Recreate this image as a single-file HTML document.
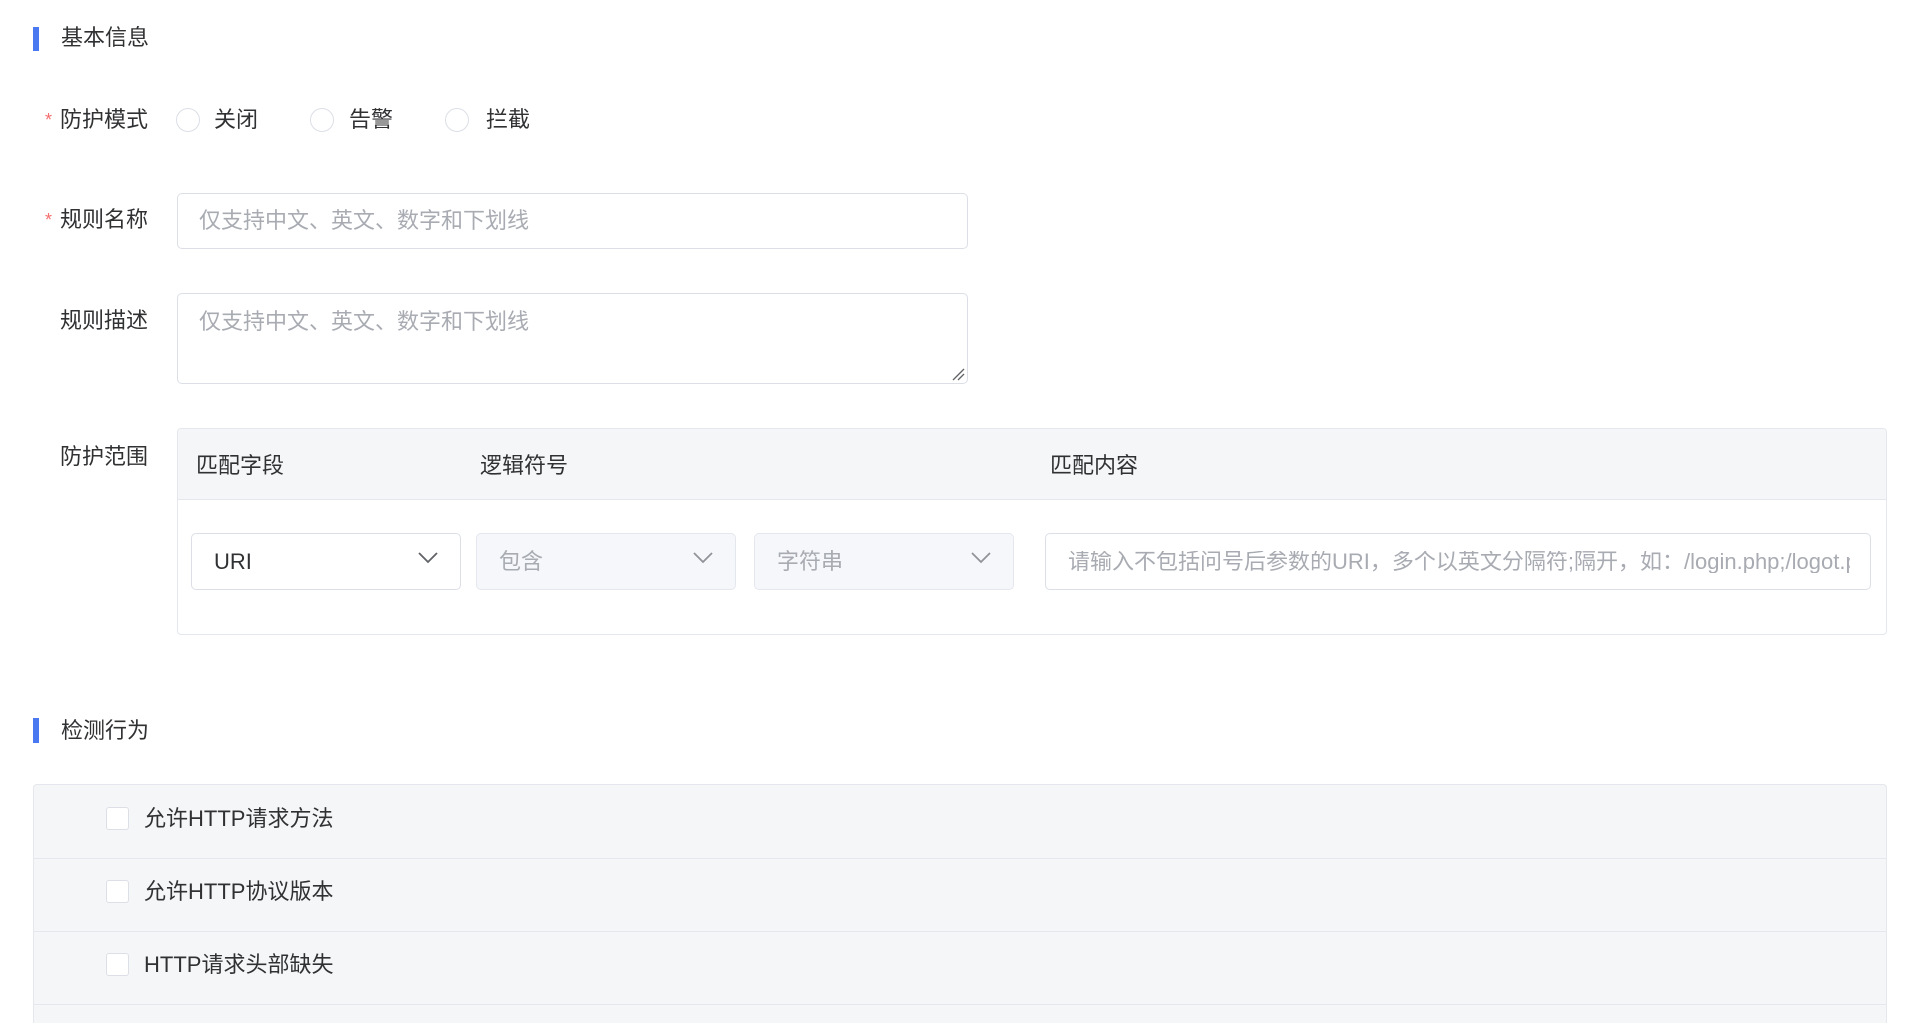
<!DOCTYPE html>
<html><head><meta charset="utf-8"><style>
*{box-sizing:border-box;margin:0;padding:0}
html{width:1913px;height:1023px;overflow:hidden}
body{width:1913px;height:1023px;background:#fff;font-family:"Liberation Sans","Noto Sans CJK SC",sans-serif;color:#303133;position:relative;overflow:hidden;font-size:22px}
.a{position:absolute}
.bar{position:absolute;left:33px;width:6px;background:#4a78f0}
.t{position:absolute;line-height:1;white-space:nowrap}
.lbl{position:absolute;right:1765px;line-height:1;white-space:nowrap}
.req:before{content:"*";color:#f56c6c;font-size:18px;position:absolute;left:-15px;top:2px}
.radio{position:absolute;width:24px;height:24px;border:1px solid #dcdfe6;border-radius:50%;background:#fff}
.box{position:absolute;border:1px solid #dcdfe6;border-radius:5px;background:#fff}
.ph{color:#a8abb2}
.chev{position:absolute;top:18px;width:20px;height:12px}
.cb{position:absolute;left:106px;width:23px;height:23px;border:1px solid #dcdfe6;border-radius:3px;background:#fff}
</style></head><body>
<div class="bar" style="top:27px;height:24px"></div>
<div class="t" style="left:61px;top:27px">基本信息</div>

<div class="lbl req" style="top:109px">防护模式</div>
<div class="radio" style="left:176px;top:108px"></div><div class="t" style="left:214px;top:109px">关闭</div>
<div class="radio" style="left:310px;top:108px"></div><div class="t" style="left:349px;top:109px">告警</div>
<div class="radio" style="left:445px;top:108px"></div><div class="t" style="left:486px;top:109px">拦截</div>

<div class="lbl req" style="top:209px">规则名称</div>
<div class="box" style="left:177px;top:193px;width:791px;height:56px"><div class="t ph" style="left:21px;top:16px">仅支持中文、英文、数字和下划线</div></div>

<div class="lbl" style="top:310px">规则描述</div>
<div class="box" style="left:177px;top:293px;width:791px;height:91px"><div class="t ph" style="left:21px;top:17px">仅支持中文、英文、数字和下划线</div>
<svg class="a" style="right:2px;bottom:2px" width="14" height="14"><path d="M2 13L13 2M7 13L13 7" stroke="#606266" stroke-width="1.3"/></svg></div>

<div class="lbl" style="top:446px">防护范围</div>
<div class="a" style="left:177px;top:428px;width:1710px;height:207px;border:1px solid #e4e7ed;border-radius:4px;background:#fff;overflow:hidden">
 <div class="a" style="left:0;top:0;right:0;height:71px;background:#f5f6f8;border-bottom:1px solid #e4e7ed"></div>
 <div class="t" style="left:18px;top:26px">匹配字段</div>
 <div class="t" style="left:302px;top:26px">逻辑符号</div>
 <div class="t" style="left:872px;top:26px">匹配内容</div>
</div>
<div class="box" style="left:191px;top:533px;width:270px;height:57px"><div class="t" style="left:22px;top:17px">URI</div><svg class="chev" style="right:22px" viewBox="0 0 20 12"><path d="M1 1l9 9 9-9" fill="none" stroke="#606266" stroke-width="1.8"/></svg></div>
<div class="box" style="left:476px;top:533px;width:260px;height:57px;background:#f5f7fa;border-color:#e4e7ed"><div class="t ph" style="left:22px;top:17px">包含</div><svg class="chev" style="right:22px" viewBox="0 0 20 12"><path d="M1 1l9 9 9-9" fill="none" stroke="#909399" stroke-width="1.8"/></svg></div>
<div class="box" style="left:754px;top:533px;width:260px;height:57px;background:#f5f7fa;border-color:#e4e7ed"><div class="t ph" style="left:22px;top:17px">字符串</div><svg class="chev" style="right:22px" viewBox="0 0 20 12"><path d="M1 1l9 9 9-9" fill="none" stroke="#909399" stroke-width="1.8"/></svg></div>
<div class="box" style="left:1045px;top:533px;width:826px;height:57px;overflow:hidden"><div class="a" style="left:22px;top:17px;right:20px;overflow:hidden;line-height:1;white-space:nowrap;color:#a8abb2">请输入不包括问号后参数的URI，多个以英文分隔符;隔开，如：/login.php;/logot.php</div></div>

<div class="bar" style="top:718px;height:25px"></div>
<div class="t" style="left:61px;top:720px">检测行为</div>

<div class="a" style="left:33px;top:784px;width:1854px;height:239px;border:1px solid #e4e7ed;border-bottom:none;border-radius:4px 4px 0 0;background:#f5f6f8">
 <div class="a" style="left:0;right:0;top:73px;border-top:1px solid #e4e7ed"></div>
 <div class="a" style="left:0;right:0;top:146px;border-top:1px solid #e4e7ed"></div>
 <div class="a" style="left:0;right:0;top:219px;border-top:1px solid #e4e7ed"></div>
</div>
<div class="cb" style="top:807px"></div><div class="t" style="left:144px;top:808px">允许HTTP请求方法</div>
<div class="cb" style="top:880px"></div><div class="t" style="left:144px;top:881px">允许HTTP协议版本</div>
<div class="cb" style="top:953px"></div><div class="t" style="left:144px;top:954px">HTTP请求头部缺失</div>
</body></html>
